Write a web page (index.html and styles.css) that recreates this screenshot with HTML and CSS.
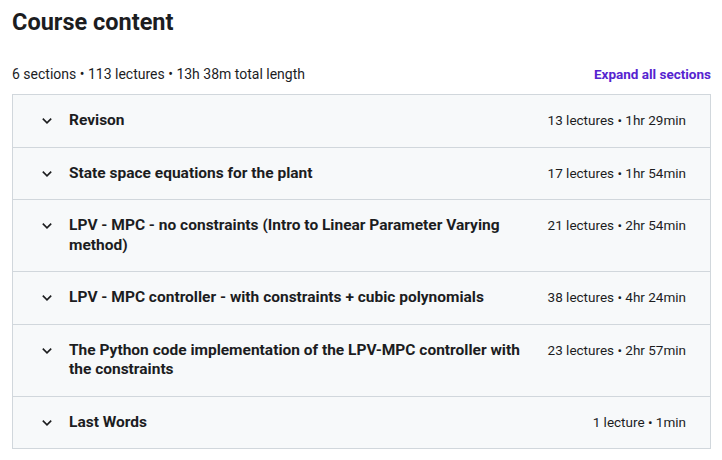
FILE: index.html
```html
<!DOCTYPE html>
<html>
<head>
<meta charset="utf-8">
<link rel="stylesheet" href="styles.css">
</head>
<body>
<div class="page">
  <h2 class="title">Course content</h2>
  <div class="summary">
    <span class="stats">6 sections • 113 lectures • 13h 38m total length</span>
    <button class="expand">Expand all sections</button>
  </div>
  <div class="sections">
    <div class="section">
      <svg class="chev" viewBox="0 0 12 12"><path d="M1.8 3.6l4.2 4.2 4.2-4.2" /></svg>
      <span class="name">Revison</span>
      <span class="meta">13 lectures • 1hr 29min</span>
    </div>
    <div class="section">
      <svg class="chev" viewBox="0 0 12 12"><path d="M1.8 3.6l4.2 4.2 4.2-4.2" /></svg>
      <span class="name">State space equations for the plant</span>
      <span class="meta">17 lectures • 1hr 54min</span>
    </div>
    <div class="section">
      <svg class="chev" viewBox="0 0 12 12"><path d="M1.8 3.6l4.2 4.2 4.2-4.2" /></svg>
      <span class="name">LPV - MPC - no constraints (Intro to Linear Parameter Varying method)</span>
      <span class="meta">21 lectures • 2hr 54min</span>
    </div>
    <div class="section">
      <svg class="chev" viewBox="0 0 12 12"><path d="M1.8 3.6l4.2 4.2 4.2-4.2" /></svg>
      <span class="name">LPV - MPC controller - with constraints + cubic polynomials</span>
      <span class="meta">38 lectures • 4hr 24min</span>
    </div>
    <div class="section">
      <svg class="chev" viewBox="0 0 12 12"><path d="M1.8 3.6l4.2 4.2 4.2-4.2" /></svg>
      <span class="name">The Python code implementation of the LPV-MPC controller with the constraints</span>
      <span class="meta">23 lectures • 2hr 57min</span>
    </div>
    <div class="section">
      <svg class="chev" viewBox="0 0 12 12"><path d="M1.8 3.6l4.2 4.2 4.2-4.2" /></svg>
      <span class="name">Last Words</span>
      <span class="meta">1 lecture • 1min</span>
    </div>
  </div>
</div>
</body>
</html>
```

FILE: styles.css
```css
* { box-sizing: border-box; }
html, body { margin: 0; padding: 0; background: #fff; }
body {
  font-family: Roboto, "Noto Sans", sans-serif;
  color: #1c1d1f;
}
.page {
  padding: 8px 11px 0 12px;
}
.title {
  margin: 0;
  font-size: 23.5px;
  line-height: 29px;
  font-weight: 700;
}
.summary {
  display: flex;
  justify-content: space-between;
  align-items: center;
  margin-top: 27px;
  height: 20px;
  margin-bottom: 10px;
}
.stats {
  font-size: 14px;
  line-height: 20px;
}
.expand {
  border: 0;
  background: none;
  padding: 0;
  font-family: inherit;
  font-size: 13.5px;
  font-weight: 700;
  color: #5624d0;
  line-height: 20px;
}
.sections {
  border: 1px solid #d1d7dc;
  border-bottom: 0;
}
.section {
  display: flex;
  align-items: flex-start;
  background: #f7f9fa;
  border-bottom: 1px solid #d1d7dc;
  padding: 16px 24px 16px 28px;
}
.chev {
  flex: none;
  width: 12px;
  height: 12px;
  margin-top: 4px;
  margin-right: 16px;
  fill: none;
  stroke: #1c1d1f;
  stroke-width: 1.6;
}
.name {
  flex: 1;
  font-size: 15.5px;
  font-weight: 700;
  line-height: 19.5px;
  padding-right: 24px;
}
.meta {
  flex: none;
  font-size: 13.5px;
  line-height: 19.5px;
}
```
